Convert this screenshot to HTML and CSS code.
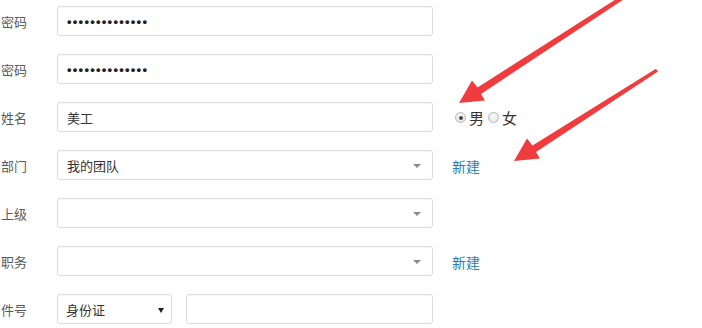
FILE: index.html
```html
<!DOCTYPE html>
<html lang="zh-CN">
<head>
<meta charset="utf-8">
<link rel="stylesheet" href="styles.css">
</head>
<body>
<div class="form">
  <div class="row">
    <div class="label"><span>密码</span></div>
    <div class="field wide"><span class="dots">••••••••••••••</span></div>
  </div>
  <div class="row">
    <div class="label"><span>密码</span></div>
    <div class="field wide"><span class="dots">••••••••••••••</span></div>
  </div>
  <div class="row">
    <div class="label"><span>姓名</span></div>
    <div class="field wide"><span class="val">美工</span></div>
    <div class="radios">
      <span class="radio checked"></span><span class="rtext">男</span>
      <span class="radio"></span><span class="rtext">女</span>
    </div>
  </div>
  <div class="row">
    <div class="label"><span>部门</span></div>
    <div class="field wide select"><span class="val">我的团队</span><span class="caret"></span></div>
    <a class="link">新建</a>
  </div>
  <div class="row">
    <div class="label"><span>上级</span></div>
    <div class="field wide select"><span class="val"></span><span class="caret"></span></div>
  </div>
  <div class="row">
    <div class="label"><span>职务</span></div>
    <div class="field wide select"><span class="val"></span><span class="caret"></span></div>
    <a class="link">新建</a>
  </div>
  <div class="row">
    <div class="label"><span>件号</span></div>
    <div class="field small select"><span class="val">身份证</span><span class="caret dark"></span></div>
    <div class="field rest"></div>
  </div>
</div>
<svg class="arrows" width="702" height="328" viewBox="0 0 702 328">
  <polygon fill="#f03c3e" points="625,-1.5 481,94 485,100.5 459,103 472,80.5 477.5,87.5 621,-4"/>
  <polygon fill="#f03c3e" points="658,71.5 536,152 540,158.5 514,161 527,138.5 532.5,145.5 656,68.8"/>
</svg>
</body>
</html>
```
FILE: styles.css
```css
html, body {
  margin: 0;
  padding: 0;
  background: #ffffff;
  overflow: hidden;
}
body {
  width: 702px;
  height: 328px;
  position: relative;
  font-family: "Noto Sans CJK SC", "Liberation Sans", sans-serif;
}
.form {
  display: flex;
  flex-direction: column;
  gap: 18px;
  padding-top: 6px;
}
.row {
  display: flex;
  align-items: center;
  height: 30px;
}
.label {
  width: 27px;
  margin-right: 30px;
  display: flex;
  justify-content: flex-end;
  white-space: nowrap;
  font-size: 13px;
  color: #5a5a5a;
}
.field {
  box-sizing: border-box;
  height: 30px;
  border: 1px solid #dcdcdc;
  border-radius: 3px;
  background: #fff;
  display: flex;
  align-items: center;
  padding-left: 9px;
  font-size: 13px;
  color: #333;
  box-shadow: inset 0 1px 1px rgba(0,0,0,0.03);
}
.wide { width: 376px; }
.small { width: 115px; padding-left: 8px; }
.rest { width: 247px; margin-left: 14px; }
.select { justify-content: space-between; padding-right: 11px; }
.small.select { padding-right: 7px; }
.dots {
  font-family: "Liberation Sans", sans-serif;
  font-size: 13px;
  letter-spacing: 1.25px;
  color: #222;
  font-weight: bold;
}
.caret {
  width: 0;
  height: 0;
  border-left: 4px solid transparent;
  border-right: 4px solid transparent;
  border-top: 4px solid #8a8a8a;
  margin-top: 2px;
}
.caret.dark {
  border-left-width: 3px;
  border-right-width: 3px;
  border-top: 5px solid #222;
}
.radios {
  display: flex;
  align-items: center;
  margin-left: 22px;
  margin-top: 1px;
}
.radio {
  box-sizing: border-box;
  width: 11px;
  height: 11px;
  border-radius: 50%;
  border: 1px solid #b8b8b8;
  background: radial-gradient(circle at 50% 40%, #fdfdfd, #dedede);
  display: flex;
  align-items: center;
  justify-content: center;
}
.radio.checked::after {
  content: "";
  width: 4px;
  height: 4px;
  border-radius: 50%;
  background: #444;
}
.rtext {
  font-size: 15px;
  color: #333;
  margin-left: 3px;
  margin-right: 4px;
}
.link {
  margin-left: 19px;
  font-size: 14px;
  color: #2b7bb0;
  margin-top: 2px;
}
.arrows {
  position: absolute;
  left: 0;
  top: 0;
  pointer-events: none;
}
```
